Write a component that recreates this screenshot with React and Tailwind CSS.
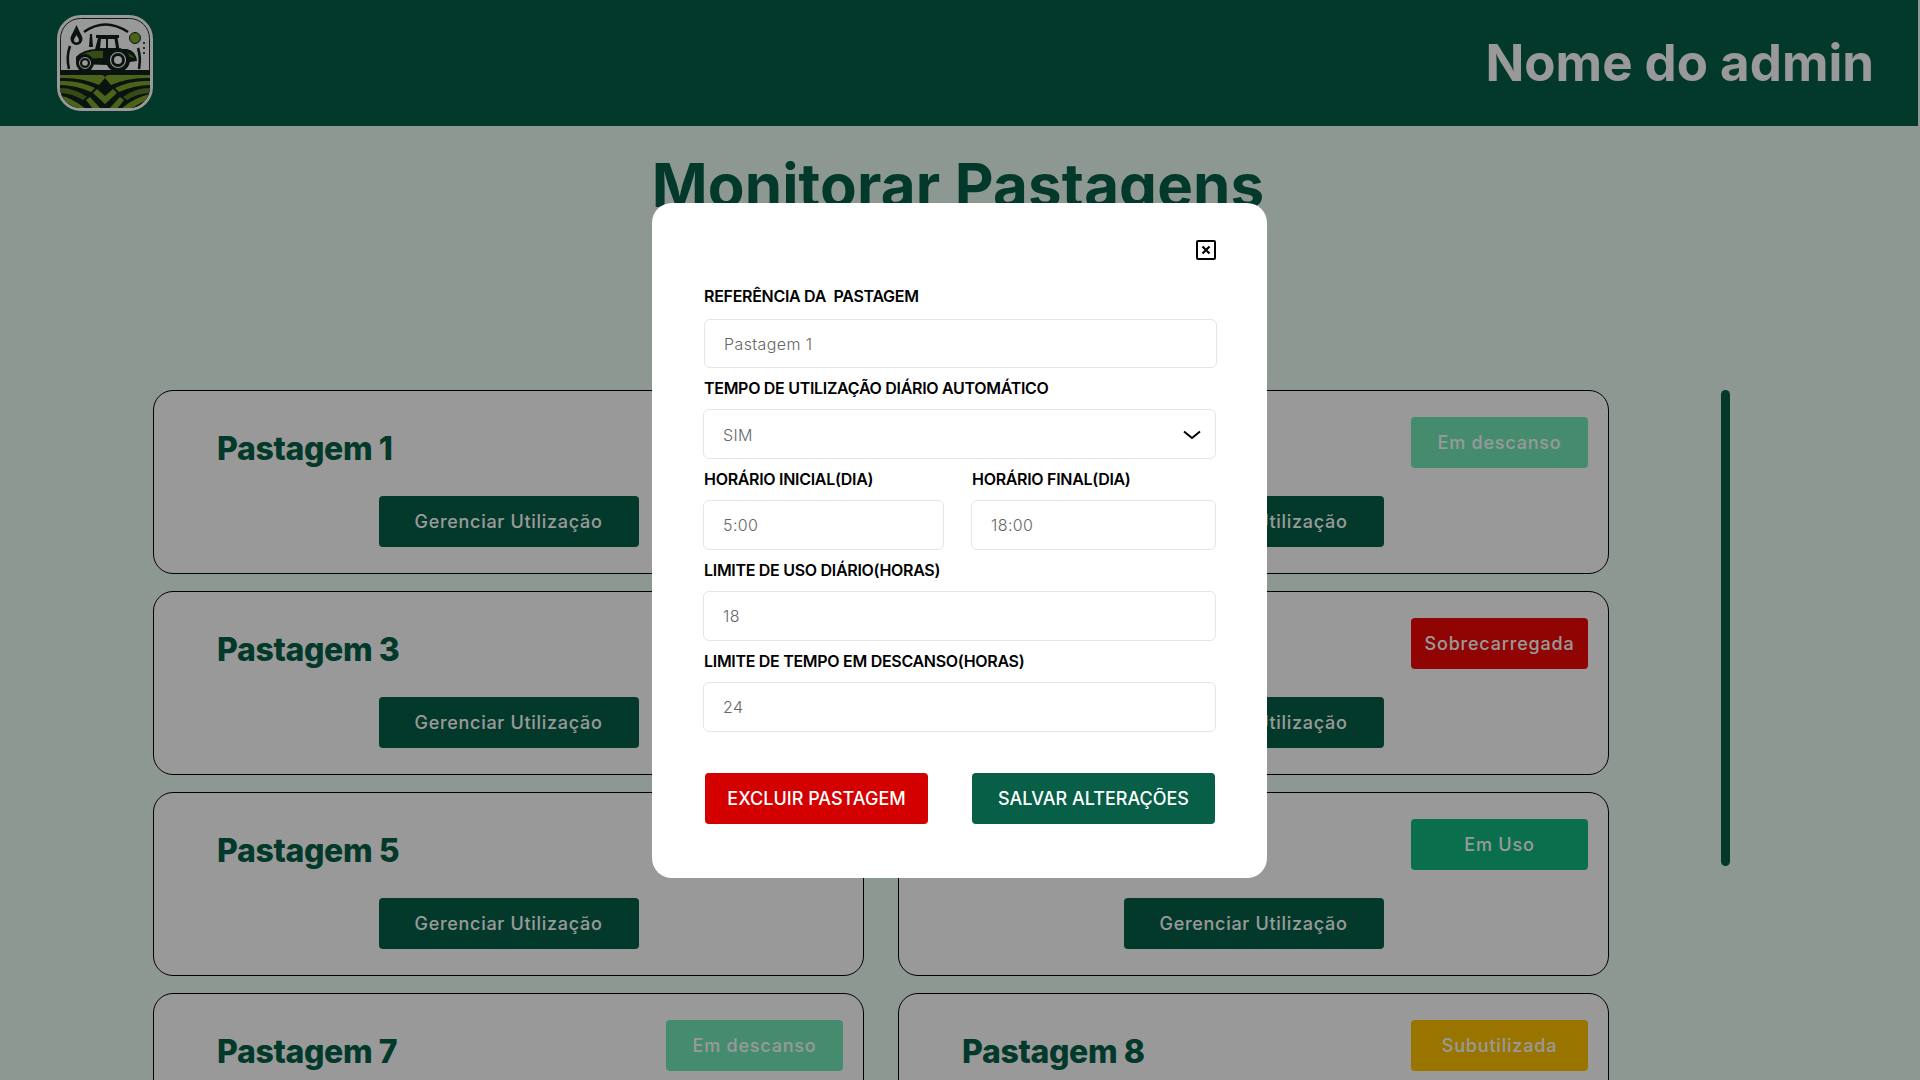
import React from 'react'

const pastures = [
  { name: 'Pastagem 1', status: 'Em Uso', color: 'bg-[#10b981]' },
  { name: 'Pastagem 2', status: 'Em descanso', color: 'bg-[#73e9b9]' },
  { name: 'Pastagem 3', status: 'Subutilizada', color: 'bg-[#ffc300]' },
  { name: 'Pastagem 4', status: 'Sobrecarregada', color: 'bg-[#f00808]' },
  { name: 'Pastagem 5', status: 'Em Uso', color: 'bg-[#10b981]' },
  { name: 'Pastagem 6', status: 'Em Uso', color: 'bg-[#10b981]' },
  { name: 'Pastagem 7', status: 'Em descanso', color: 'bg-[#73e9b9]' },
  { name: 'Pastagem 8', status: 'Subutilizada', color: 'bg-[#ffc300]' },
]

// Farm badge, redrawn by hand
const Logo = () => (
  <svg viewBox="0 0 96 96" className="w-24 h-24 shrink-0">
    <defs>
      <clipPath id="logoClip">
        <rect x="3" y="3" width="90" height="90" rx="21" />
      </clipPath>
    </defs>
    <rect x="1" y="1" width="94" height="94" rx="23" fill="#ffffff" stroke="#ffffff" strokeWidth="2" />
    <rect x="3.5" y="3.5" width="89" height="89" rx="20" fill="#ffffff" stroke="#1c3029" strokeWidth="1" />
    <g clipPath="url(#logoClip)">
      {/* sky decoration */}
      <path d="M19.5 10 C16 18 13.5 21 13.5 24 a6 6 0 0 0 12 0 C25.5 21 23 18 19.5 10 Z" fill="#0f2019" />
      <path d="M19.5 20 C18 22.5 17 23.5 17 25 a2.5 2.5 0 0 0 5 0 C22 23.5 21 22.5 19.5 20 Z" fill="#ffffff" />
      <path d="M27 17 Q48 2 71 17" fill="none" stroke="#0f2019" strokeWidth="2.6" />
      <circle cx="78" cy="23" r="5.5" fill="#7ea52d" stroke="#0f2019" strokeWidth="1" />
      <circle cx="87" cy="28" r="1.1" fill="#0f2019" />
      <circle cx="87" cy="33" r="1.1" fill="#0f2019" />
      <circle cx="87" cy="38" r="1.1" fill="#0f2019" />
      <path d="M13 31 Q9 42 12 54" fill="none" stroke="#0f2019" strokeWidth="2.6" />
      <path d="M81 33 Q84 42 82 54" fill="none" stroke="#0f2019" strokeWidth="2.6" />
      {/* tractor */}
      <path d="M33 19 L35 19 L36 32 L32 32 Z" fill="#0f2019" />
      <path d="M39 20 H62 V23 H60.5 L63 38 H37 L41 23 H39 Z" fill="#0f2019" />
      <path d="M44 24 H49 V33 H43 Z M51 24 H57.5 L59 33 H51 Z" fill="#ffffff" />
      <path d="M19 42 Q27 33 44 34 L70 34 Q79 36 80 46 L51 50 L19 49 Z" fill="#0f2019" />
      <path d="M23 41 Q31 35 46 36 L46 43 L22 44 Z" fill="#5d7f22" />
      <path d="M52 38 Q66 31 78 43 L72 42 Q62 35 54 41 Z" fill="#5d7f22" />
      <circle cx="61" cy="45" r="12" fill="#0f2019" />
      <circle cx="61" cy="45" r="7.5" fill="none" stroke="#ffffff" strokeWidth="1.2" />
      <circle cx="61" cy="45" r="4" fill="#ffffff" />
      <circle cx="28" cy="48" r="9" fill="#0f2019" />
      <circle cx="28" cy="48" r="5.5" fill="none" stroke="#ffffff" strokeWidth="1" />
      <circle cx="28" cy="48" r="2.8" fill="#ffffff" />
      {/* fields */}
      <rect x="0" y="55" width="96" height="41" fill="#0f2019" />
      <g fill="#7ea52d">
        <path d="M3 60 H44 Q48 60 48 63 L42 70 Q24 62 3 63 Z" />
        <path d="M3 66 Q22 65 38 73 L34 77 Q18 70 3 70 Z" />
        <path d="M3 73 Q18 73 30 82 L26 85 Q14 78 3 78 Z" fill="#5d7f22" />
        <path d="M3 81 Q14 82 29 94 L20 94 Q12 88 3 85 Z" />
        <path d="M93 60 H52 Q48 60 48 63 L54 70 Q72 62 93 63 Z" />
        <path d="M93 66 Q74 65 58 73 L62 77 Q78 70 93 70 Z" />
        <path d="M93 73 Q78 73 66 82 L70 85 Q82 78 93 78 Z" fill="#5d7f22" />
        <path d="M93 79 Q76 83 64 94 L74 94 Q84 87 93 84 Z" />
        <path d="M40 74 L48 81 L56 74 L60 78 L48 89 L36 78 Z" />
        <path d="M33 82 L44 94 L36 94 L29 85 Z" />
        <path d="M63 82 L52 94 L60 94 L67 85 Z" />
      </g>
    </g>
  </svg>
)

const PastureCard = ({ name, status, color }) => (
  <div className="h-[184px] rounded-[20px] border border-black bg-white pt-[26px] pr-[20px] pl-[63px]">
    <div className="flex justify-between">
      <h2 className="pt-[12px] text-[32px] leading-[39px] font-extrabold tracking-[-0.35px] text-[#065f46]">{name}</h2>
      <span className={`flex h-[51px] w-[177px] items-center justify-center rounded text-lg font-medium tracking-[0.8px] text-white ${color}`}>
        {status}
      </span>
    </div>
    <div className="mt-[28px] -mr-[20px] -ml-[63px] flex justify-center">
      <button className="h-[51px] w-[260px] rounded bg-[#065f46] text-lg font-medium tracking-[0.7px] text-white">
        Gerenciar Utilização
      </button>
    </div>
  </div>
)

const fieldClass = 'block h-[50px] w-full rounded-md border border-[#e5e5e5] bg-white pl-[19px] text-base font-light tracking-[0.4px] text-[#666] outline-none'
const labelClass = 'block h-6 text-base leading-6 font-semibold tracking-[-0.3px] whitespace-pre text-black'

const PastureModal = () => (
  <div className="fixed inset-0 bg-black/40">
    <div className="mt-[203px] ml-[652px] h-[675px] w-[615px] rounded-[20px] bg-white pt-[37px] pr-[51px] pl-[51px]">
      <div className="flex justify-end">
        <button className="flex h-5 w-5 items-center justify-center rounded-[2px] border-2 border-black text-black">
          <svg viewBox="0 0 10 10" className="h-2.5 w-2.5">
            <path d="M1.5 1.5 L8.5 8.5 M8.5 1.5 L1.5 8.5" stroke="currentColor" strokeWidth="2.2" />
          </svg>
        </button>
      </div>

      <label className={`${labelClass} mt-[24px] pl-px`}>REFERÊNCIA DA  PASTAGEM</label>
      <input readOnly value="Pastagem 1" className={`${fieldClass} mt-[11px] ml-px !h-[49px] !w-[513px]`} />

      <label className={`${labelClass} mt-[8px] pl-px`}>TEMPO DE UTILIZAÇÃO DIÁRIO AUTOMÁTICO</label>
      <div className="relative mt-[9px]">
        <select className={`${fieldClass} appearance-none pt-[2px]`}>
          <option>SIM</option>
          <option>NÃO</option>
        </select>
        <svg viewBox="0 0 18 10" className="pointer-events-none absolute top-[21px] right-[15px] h-2.5 w-[18px] text-black">
          <path d="M1 1.5 L9 8 L17 1.5" fill="none" stroke="currentColor" strokeWidth="2" />
        </svg>
      </div>

      <div className="mt-[8px] grid grid-cols-[241px_245px] gap-x-[27px]">
        <div>
          <label className={`${labelClass} pl-px`}>HORÁRIO INICIAL(DIA)</label>
          <input readOnly value="5:00" className={`${fieldClass} mt-[9px]`} />
        </div>
        <div>
          <label className={`${labelClass} pl-px`}>HORÁRIO FINAL(DIA)</label>
          <input readOnly value="18:00" className={`${fieldClass} mt-[9px]`} />
        </div>
      </div>

      <label className={`${labelClass} mt-[8px] pl-px`}>LIMITE DE USO DIÁRIO(HORAS)</label>
      <input readOnly value="18" className={`${fieldClass} mt-[9px]`} />

      <label className={`${labelClass} mt-[8px] pl-px`}>LIMITE DE TEMPO EM DESCANSO(HORAS)</label>
      <input readOnly value="24" className={`${fieldClass} mt-[9px]`} />

      <div className="mt-[41px] ml-[2px] flex gap-[44px]">
        <button className="h-[51px] w-[223px] rounded bg-[#d40000] text-lg font-medium text-white">EXCLUIR PASTAGEM</button>
        <button className="h-[51px] w-[243px] rounded bg-[#065f46] text-lg font-medium text-white">SALVAR ALTERAÇÕES</button>
      </div>
    </div>
  </div>
)

export default function App() {
  return (
    <div className="h-screen overflow-hidden bg-[#ecfdf5] [font-family:Inter,sans-serif]">
      <header className="mr-[2px] flex h-[126px] items-center justify-between bg-[#065f46] pr-[44px] pl-[57px]">
        <Logo />
        <span className="text-[51px] font-bold text-white">Nome do admin</span>
      </header>

      <main>
        <h1 className="pt-[19px] pr-[4px] text-center text-[60px] leading-[80px] font-bold tracking-[0.15px] text-[#065f46]">
          Monitorar Pastagens
        </h1>

        <div className="mt-[165px] flex items-start pl-[153px]">
          <div className="grid w-[1456px] grid-cols-2 gap-x-[34px] gap-y-[17px]">
            {pastures.map((p) => (
              <PastureCard key={p.name} {...p} />
            ))}
          </div>
          <div className="ml-[112px] h-[476px] w-[9px] rounded-full bg-[#065f46]" />
        </div>
      </main>

      <PastureModal />
    </div>
  )
}
